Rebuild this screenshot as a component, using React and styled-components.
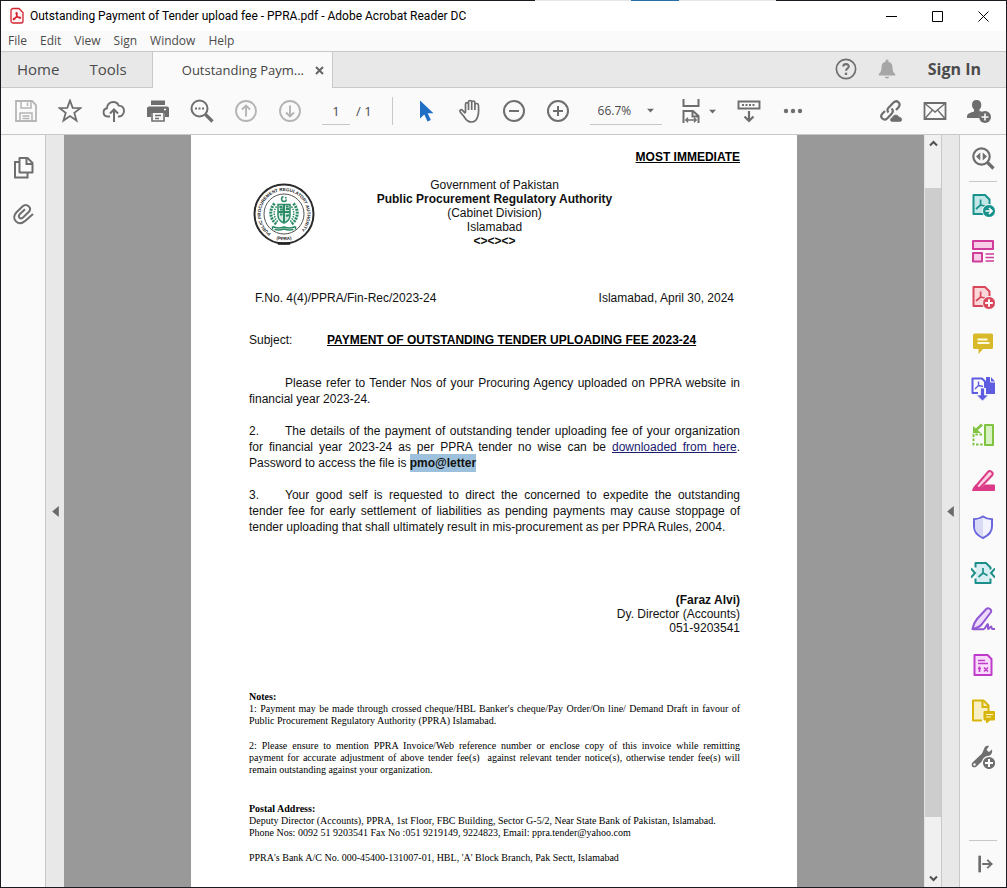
import React from "react";
import styled, { createGlobalStyle, css } from "styled-components";

const ui = `"Open Sans", "Noto Sans", sans-serif`;
const sans = `"Liberation Sans", Arial, sans-serif`;
const serif = `"Liberation Serif", "Times New Roman", serif`;
const line = "#c8c8c8";
const ink = "#6e6e6e";
const faint = "#b5b5b5";

const GlobalStyle = createGlobalStyle`
  *, *::before, *::after { box-sizing: border-box; }
  body { margin: 0; background: #fafafa; font-family: ${ui}; color: #4b4b4b; }
  button, input, select { font: inherit; color: inherit; }
  p, h1, h2 { margin: 0; }
`;

const AppWindow = styled.div`
  display: flex;
  flex-direction: column;
  min-height: 100vh;
  border: 1px solid #1c1a20;
  border-top: 0;
`;

const DesktopEdge = styled.div`
  height: 1px;
  display: grid;
  grid-template-columns: 534fr 96fr 48fr 97fr 230fr;
  background: #1c1a20;
`;
const EdgePiece = styled.span`
  background: ${(p) => p.$color};
`;

const PlainButton = styled.button`
  display: inline-flex;
  align-items: center;
  justify-content: center;
  padding: 0;
  border: 0;
  background: none;
  flex: none;
`;

const TitleBar = styled.header`
  display: flex;
  align-items: center;
  height: 30px;
  padding-left: 8px;
  gap: 5px;
  background: #fff;
`;
const WindowTitle = styled.h1`
  flex: 1;
  font-family: Roboto, ${ui};
  font-size: 12px;
  line-height: 16px;
  font-weight: 400;
  color: #000;
  white-space: nowrap;
`;
const WindowButton = styled(PlainButton)`
  width: 46px;
  height: 30px;
  color: #000;
`;

const MenuBar = styled.nav`
  display: flex;
  align-items: center;
  height: 21px;
  padding-left: 7px;
  gap: 13px;
  background: #fafafa;
  border-bottom: 1px solid ${line};
`;
const MenuButton = styled(PlainButton)`
  font-size: 12px;
  line-height: 16px;
`;

const TabBar = styled.div`
  display: flex;
  height: 36px;
  background: #e8e8e8;
`;
const tabBase = css`
  border-bottom: 1px solid ${line};
`;
const SectionTabs = styled.div`
  ${tabBase}
  display: flex;
  align-items: center;
  gap: 30px;
  width: 152px;
  padding: 0 0 2px 16px;
  border-right: 1px solid ${line};
`;
const SectionTab = styled(PlainButton)`
  font-size: 15px;
  line-height: 20px;
`;
const FileTab = styled.div`
  display: flex;
  align-items: center;
  justify-content: flex-end;
  gap: 11px;
  width: 180px;
  padding-right: 8px;
  background: #fafafa;
  border-right: 1px solid ${line};
`;
const FileTabName = styled(PlainButton)`
  font-size: 13px;
  line-height: 20px;
  color: #444;
`;
const Account = styled.div`
  ${tabBase}
  flex: 1;
  display: flex;
  align-items: center;
  justify-content: flex-end;
  gap: 19px;
  padding: 0 25px 2px 0;
`;
const AccountButton = styled(PlainButton)`
  color: ${ink};
`;
const SignIn = styled(PlainButton)`
  margin-left: 11px;
  font-size: 16px;
  line-height: 20px;
  font-weight: 700;
`;

const Toolbar = styled.div`
  display: flex;
  align-items: center;
  height: 47px;
  padding: 0 5px 0 3px;
  background: #fafafa;
  border-bottom: 1px solid ${line};
`;
const ToolButton = styled(PlainButton)`
  width: 44px;
  height: 40px;
  color: ${(p) => (p.disabled ? faint : ink)};
`;
const PageCounter = styled.label`
  display: flex;
  align-items: center;
  gap: 6px;
  margin-left: 10px;
  font-size: 13px;
  line-height: 20px;
`;
const PageInput = styled.input`
  width: 28px;
  height: 28px;
  padding: 0;
  text-align: center;
  border: 0;
  border-bottom: 1px solid ${line};
  background: none;
`;
const Divider = styled.span`
  width: 1px;
  height: 28px;
  margin: 0 11px 0 20px;
  background: ${line};
`;
const ZoomField = styled.span`
  display: flex;
  align-items: center;
  width: 72px;
  height: 28px;
  margin: 0 14px 0 10px;
  padding-right: 8px;
  border-bottom: 1px solid ${line};
`;
const ZoomSelect = styled.select`
  flex: 1;
  min-width: 0;
  padding: 0 0 0 8px;
  border: 0;
  background: none;
  appearance: none;
  font-size: 12px;
`;
const ToolGap = styled.span`
  flex: 1;
`;
const FitButton = styled(ToolButton)`
  gap: 6px;
  margin-right: 7px;
`;

const Workspace = styled.div`
  flex: 1;
  display: flex;
`;
const SideNav = styled.nav`
  display: flex;
  flex-direction: column;
  align-items: center;
  width: 45px;
  padding: 10px 0 0 2px;
  background: #fafafa;
  border-right: 1px solid ${line};
`;
const NavButton = styled(PlainButton)`
  width: 40px;
  height: 46px;
  color: ${ink};
`;
const Splitter = styled(PlainButton)`
  width: ${(p) => p.$width};
  align-self: stretch;
  background: #e8e8e8;
  border-left: ${(p) => (p.$ruled ? `1px solid ${line}` : "0")};
`;
const Viewer = styled.main`
  flex: 1;
  min-width: 0;
  background: #999;
`;

const Scrollbar = styled.div`
  display: flex;
  flex-direction: column;
  width: 17px;
  background: #f0f0f0;
  border-left: 1px solid #e4e4e4;
`;
const ScrollButton = styled(PlainButton)`
  height: 17px;
  color: #505050;
`;
const ScrollSpace = styled.span`
  flex: ${(p) => p.$share};
  background: ${(p) => (p.$thumb ? "#cdcdcd" : "none")};
`;

const ToolsPane = styled.aside`
  display: flex;
  flex-direction: column;
  align-items: center;
  width: 47px;
  background: #fafafa;
  border-left: 1px solid ${line};
`;
const PaneButton = styled(PlainButton)`
  width: 46px;
  height: 46px;
  color: ${ink};
`;
const PaneRule = styled.span`
  width: 28px;
  height: 1px;
  background: ${line};
`;
const PaneGap = styled.span`
  flex: 1;
`;

const Paper = styled.article`
  max-width: 606px;
  min-height: 100%;
  margin: 0 auto;
  padding: 15px 57px 22px 58px;
  background: #fff;
  color: #111;
  font-family: ${sans};
  font-size: 12px;
  line-height: 14px;
`;
const Urgency = styled.p`
  text-align: right;
  font-weight: 700;
  text-decoration: underline;
  color: #000;
`;
const Letterhead = styled.div`
  display: grid;
  grid-template-columns: 1fr auto 1fr;
  margin-top: 14px;
  text-align: center;
`;
const SealBox = styled.div`
  padding: 5px 0 0 4px;
  text-align: left;
`;
const RefRow = styled.div`
  display: flex;
  justify-content: space-between;
  margin-top: 43px;
  padding: 0 6px;
`;
const SubjectRow = styled.div`
  display: flex;
  margin-top: 28px;
`;
const SubjectLabel = styled.span`
  width: 78px;
`;
const SubjectTitle = styled.h2`
  font-size: 12px;
  line-height: 14px;
  text-decoration: underline;
  color: #000;
`;
const Letter = styled.div`
  display: grid;
  gap: 16px;
  margin-top: 28px;
  line-height: 16px;
  text-align: justify;
`;
const Para = styled.p`
  text-indent: ${(p) => (p.$indent ? "36px" : "0")};
`;
const ParaNumber = styled.span`
  display: inline-block;
  width: 36px;
`;
const LetterLink = styled.a`
  color: #1a1a6e;
  text-decoration: underline;
`;
const Marked = styled.mark`
  font-weight: 700;
  color: #111;
  background: #9dc1dc;
  padding: 2px 0;
`;
const Signature = styled.div`
  margin-top: 58px;
  text-align: right;
`;
const Notes = styled.section`
  margin-top: ${(p) => p.$top};
  font-family: ${serif};
  font-size: 10px;
  line-height: 12px;
  text-align: justify;
  color: #000;
`;
const Note = styled.p`
  & + & { margin-top: 13px; }
`;

function Icon({ size = 24, width = 2, children, ...rest }) {
  return (
    <svg width={size} height={size} viewBox="0 0 24 24" fill="none" stroke="currentColor" strokeWidth={width} aria-hidden="true" {...rest}>
      {children}
    </svg>
  );
}

const Trefoil = ({ color, w = 1.2 }) => (
  <path d="M9.600 6.500v5.500l-4.600 4M9.600 12l6 1.500" stroke={color} strokeWidth={w + 0.5} />
);

function Caret({ left, size = 7 }) {
  return (
    <svg width={size} height={size} viewBox="0 0 10 10" aria-hidden="true">
      <path d={left ? "M8 0v10L2 5z" : "M0 2.500h10L5 8z"} fill="#6a6a6a" />
    </svg>
  );
}

function PdfMark() {
  return (
    <svg width="16" height="18" viewBox="0 0 16 18" fill="none" stroke="#d3232f" aria-hidden="true">
      <path d="M4 1.500h6l4 4V14a2 2 0 0 1-2 2H4a2 2 0 0 1-2-2V3.500a2 2 0 0 1 2-2z" fill="#fff4f4" strokeWidth="1.300" />
      <path d="M7.500 5.500c1.400 0 .3 3.500-1 5.500-1 1.800-2.500 2.200-2.300 1.200.3-1.200 3.800-2.300 6.300-2.200 1.700.1 1.500 1.500.2 1.200C8.700 10.700 6 5.600 7.500 5.500z" strokeWidth="1.200" />
    </svg>
  );
}

function Seal() {
  return (
    <svg width="62" height="62" viewBox="0 0 124 124" role="img" aria-label="Public Procurement Regulatory Authority seal">
      <defs>
        <path id="ring-top" d="M36 101A46.500 46.500 0 1 1 92 98" />
        <path id="ring-foot" d="M24 99A54 54 0 0 0 100 99" />
      </defs>
      <circle cx="62" cy="62" r="59" fill="#fff" stroke="#2b2b2b" strokeWidth="4" />
      <circle cx="62" cy="62" r="40" fill="none" stroke="#555" strokeWidth="2" />
      <text fontFamily="Liberation Sans, Arial, sans-serif" fontWeight="700" fontSize="9" fill="#222">
        <textPath href="#ring-top">PUBLIC PROCUREMENT REGULATORY AUTHORITY</textPath>
      </text>
      <text fontFamily="Liberation Sans, Arial, sans-serif" fontWeight="700" fontSize="9" fill="#222">
        <textPath href="#ring-foot" startOffset="50%" textAnchor="middle">(PPRA)</textPath>
      </text>
      <path d="M50 121h24" stroke="#222" strokeWidth="5" />
      <g fill="none" stroke="#2d8a66">
        <path d="M61 27a5 5 0 1 0 6 6" strokeWidth="3" />
        <path d="M64 29l3 1" strokeWidth="3" />
        <path d="M43 41c-12 14-9 32 5 42M81 41c12 14 9 32-5 42" strokeWidth="6" strokeDasharray="4 2" />
        <path d="M47 47c-7 10-6 22 3 31M77 47c7 10 6 22-3 31" strokeWidth="3" strokeDasharray="3 2" />
        <path d="M50 43h24v22q0 10-12 15-12-5-12-15z" fill="#d4ebe1" strokeWidth="3" />
        <path d="M62 43v35M50 58h24M53 48h6M66 52h6M54 63h5M66 66l6-2M54 53h6M66 47h5" strokeWidth="4" />
        <path d="M39 87q10 5 23 1 13 4 23-1M43 93q9 2 19-1 10 3 19 1M39 87v6M85 87v6" strokeWidth="3" />
      </g>
    </svg>
  );
}

const icons = {
  save: (
    <Icon width={1.800}>
      <path d="M2 2h16l4 4v16H2z" />
      <path d="M7 2v7h10V2M13.500 3.500v3.500M6 22v-8h12v8M8.500 17h7M8.500 19.500h7" strokeWidth="1.500" />
    </Icon>
  ),
  star: (
    <Icon width={1.800}><path d="M12 1.500l2.700 7.400 7.800.2-6.200 4.800 2.200 7.600L12 17l-6.500 4.500 2.200-7.600L1.500 9.100l7.800-.2z" /></Icon>
  ),
  upload: (
    <Icon width={1.900}>
      <path d="M8 17.500H5.500a4.200 4.200 0 0 1-.6-8.300C4.800 5.500 8 3 11.200 3c2.700 0 4.600 1.300 5.500 3.600 3.200-.1 5.300 2.200 5.300 5.200 0 3.300-2.300 5.700-5 5.700h-1" />
      <path d="M12 23V11M8 14.500l4-4 4 4" strokeWidth="2" />
    </Icon>
  ),
  print: (
    <Icon width={0}>
      <path d="M5 1.500h14V6H5zM3 7.500h18a2 2 0 0 1 2 2V18h-4v-4H5v4H1V9.500a2 2 0 0 1 2-2z" fill="currentColor" />
      <path d="M6 14v8h12v-8M9 16.500h6M9 19.500h4" strokeWidth="1.600" />
      <path d="M18 10.500h2" stroke="#fff" strokeWidth="1.500" />
    </Icon>
  ),
  find: (
    <Icon width={2}>
      <circle cx="9.500" cy="9.500" r="8" />
      <path d="M15.500 15.500l7 7" strokeWidth="3.200" />
      <path d="M5 9.500h2M8.500 9.500h2M12 9.500h2" />
    </Icon>
  ),
  up: (
    <Icon width={1.900}><circle cx="12" cy="12" r="10" /><path d="M12 17.500V7M8 10.500l4-4 4 4" /></Icon>
  ),
  down: (
    <Icon width={1.900}><circle cx="12" cy="12" r="10" /><path d="M12 6.500V17M8 13.500l4 4 4-4" /></Icon>
  ),
  pointer: (
    <Icon width={0}><path d="M6 1.500v18l4.300-4 3.200 7 3.400-1.500-3.200-6.700h5.800z" fill="#1f6fc5" /></Icon>
  ),
  hand: (
    <Icon width={1.700}>
      <path d="M7.500 13.500V5.200c0-2 3-2 3 0V11M10.500 11V3c0-2 3.200-2 3.200 0v8M13.700 11V3.500c0-2 3.200-2 3.200 0V11M16.900 11V6c0-2 3.300-2 3.500 0 .3 3.500.6 7-.4 10.500C19 20.800 17 23 13.500 23 9 23 7.500 20 6 17.500L2.200 13c-1-1.800 1-3 2.300-1.700l3 3" strokeLinejoin="round" />
    </Icon>
  ),
  minus: (
    <Icon width={2}><circle cx="12" cy="12" r="10" /><path d="M7 12h10" /></Icon>
  ),
  plus: (
    <Icon width={2}><circle cx="12" cy="12" r="10" /><path d="M7 12h10M12 7v10" /></Icon>
  ),
  fit: (
    <Icon width={2}>
      <path d="M4.500 0v7h15V0M4.500 24V12h9.500l5.500 5v7M13.500 12v5.500h6" />
      <path d="M7 21h10M9 18.800L6.800 21 9 23.200M15 18.800l2.200 2.200-2.200 2.200" strokeWidth="1.400" />
    </Icon>
  ),
  scrollPages: (
    <Icon width={1.900}>
      <path d="M1.500 2.500h21v7h-21z" />
      <path d="M5 6h14" strokeDasharray="2 1.500" />
      <path d="M12 12v9.500M7.500 17.500l4.500 4.500 4.500-4.500" strokeWidth="2.200" />
    </Icon>
  ),
  more: (
    <Icon width={0}>
      <circle cx="5" cy="12" r="2.200" fill="currentColor" /><circle cx="12" cy="12" r="2.200" fill="currentColor" /><circle cx="19" cy="12" r="2.200" fill="currentColor" />
    </Icon>
  ),
  link: (
    <Icon width={2.200}>
      <path d="M9.500 13.500c-1.500-1.700-1.200-3.500 0-4.800l5-5.200c3.500-3.300 8 1.300 5 4.700L17 11" />
      <path d="M12.500 9.500c1.700 1.500 1.600 3.400.3 4.900l-4.600 5C4.800 22.600.2 18.200 3.300 14.700L6 12" />
      <path d="M13 22.500c-2.300-.3-2-3.700.4-3.700.5-3.500 5.600-3.600 6.600-.6 3.300-.4 3.800 4.300.8 4.300z" fill="currentColor" strokeWidth=".6" />
    </Icon>
  ),
  mail: (
    <Icon width={1.800}>
      <path d="M1.500 4h21v16h-21z" /><path d="M2 4.500l10 8.500 10-8.500M2 19.500l7.500-8.500M22 19.500L14.500 11" strokeWidth="1.400" />
    </Icon>
  ),
  person: (
    <Icon width={0}>
      <path d="M9.500 1C6.500 1 5 3 5 5.800c0 2 .8 3.700 2 4.700v2C4 13.500 0 14.500 0 17.500V19h12c0-3 1.500-5 4-6l-3.500-1v-1.500c1.200-1 1.800-2.700 1.800-4.700C14.300 3 12.500 1 9.500 1z" fill="currentColor" />
      <circle cx="18" cy="18" r="6" fill="currentColor" />
      <path d="M14.500 18h7M18 14.500v7" stroke="#fafafa" strokeWidth="1.600" />
    </Icon>
  ),
  help: (
    <Icon size={22} width={1.800}>
      <circle cx="12" cy="12" r="10.500" />
      <path d="M9 9.300c.2-3.600 6.200-3.500 6 0-.1 2.100-3 2.200-3 4.700" strokeWidth="2.300" />
      <path d="M12 16v2.500" strokeWidth="2.500" />
    </Icon>
  ),
  bell: (
    <Icon size={22} width={0}>
      <path d="M10.500 4V2h3v2c3 .6 4.500 2.800 4.500 6 0 4.500 1.500 6 3 7.500V19H3v-1.500C4.500 16 6 14.500 6 10c0-3.200 1.500-5.400 4.500-6zM9.500 20.500h5c-.5 2.500-4.500 2.500-5 0z" fill="#a6a6a6" />
    </Icon>
  ),
  pages: (
    <Icon width={2}>
      <path d="M7.500 2h8l5 5v9.500h-13z" strokeLinejoin="round" /><path d="M14.500 2v6h6" /><path d="M7 6H3v15.500h12.500V17" />
    </Icon>
  ),
  clip: (
    <Icon width={2}>
      <path d="M21 12l-7.600 6.800c-3.200 2.800-6.800 3.100-9.400.6-2.600-2.600-2.200-6.300.5-9.200l6.200-5.900c4-3.500 9.700 1.400 6.200 5.500L11 15.500c-2.700 2.300-5.500-.7-3.300-3.200l5.300-5.100" />
    </Icon>
  ),
  preview: (
    <Icon width={2.200}>
      <circle cx="10.500" cy="10.500" r="8.200" />
      <path d="M16.500 16.500l6 6" strokeWidth="3.200" /><path d="M9.300 6.500v8L5 10.500zM11.700 6.500v8l4.300-4z" fill="currentColor" strokeWidth="0" />
    </Icon>
  ),
  exportPdf: (
    <Icon stroke="#17918c">
      <path d="M2.500 2h11.500l4.500 4.500V21h-16z" fill="#c3e6e6" strokeLinejoin="round" />
      <Trefoil color="#17918c" />
      <circle cx="18" cy="18" r="6.500" fill="#17918c" stroke="#fafafa" strokeWidth="1" />
      <path d="M14.500 18h6M18 15l3 3-3 3" stroke="#fff" strokeWidth="1.700" />
    </Icon>
  ),
  organize: (
    <Icon stroke="#cf3d9b">
      <path d="M2 2h20v8H2z" fill="#f7cde8" strokeLinejoin="round" /><path d="M2 14h9v8.500H2z" fill="#f7cde8" strokeLinejoin="round" />
      <path d="M14.500 15H23M14.500 18.500H23M14.500 22H23" strokeWidth="1.300" />
    </Icon>
  ),
  createPdf: (
    <Icon stroke="#d9475a">
      <path d="M2.500 2h11.500l4.500 4.500V21h-16z" fill="#fbd7da" strokeLinejoin="round" />
      <Trefoil color="#d9475a" />
      <circle cx="18" cy="18" r="6.500" fill="#d9475a" stroke="#fafafa" strokeWidth="1" />
      <path d="M14.200 18h7.600M18 14.200v7.600" stroke="#fff" strokeWidth="1.900" />
    </Icon>
  ),
  comment: (
    <Icon width={0}>
      <path d="M3.500 2.500h17a1.500 1.500 0 0 1 1.500 1.500v12.500a1.500 1.500 0 0 1-1.500 1.500H12l-4.500 5v-5h-4A1.500 1.500 0 0 1 2 16.500V4a1.500 1.500 0 0 1 1.500-1.500z" fill="#d8b92a" />
      <path d="M6.500 8.500h10M6.500 12h12" stroke="#fffbe0" strokeWidth="1.800" />
    </Icon>
  ),
  combine: (
    <Icon stroke="#5e5ce0">
      <path d="M15 0h5l4 4.500V17h-9z" fill="#5e5ce0" strokeWidth="0" />
      <path d="M19.500 0v5H24" stroke="#fafafa" strokeWidth="1" />
      <path d="M7 16H1.500V1.500H11l3 3V11" fill="#fafafa" strokeLinejoin="round" />
      <path d="M7.500 4.500v4l-3.500 3.500M7.500 8.500l4.500 1" strokeWidth="1.400" />
      <path d="M9.500 11h4v7h4L11.500 24l-6-6h4z" fill="#5e5ce0" stroke="#fafafa" strokeWidth=".8" />
    </Icon>
  ),
  compare: (
    <Icon stroke="#80c342">
      <path d="M14 2h8v20h-8z" fill="#d9f2c4" strokeLinejoin="round" />
      <path d="M11 11.500H2.500v10H12" strokeDasharray="2.500 1.700" />
      <path d="M11 1.500L4 8" strokeWidth="2.500" /><path d="M2 3v7h8z" fill="#80c342" strokeWidth="0" />
    </Icon>
  ),
  highlight: (
    <Icon stroke="#dc3a86">
      <path d="M5 17L17 2.800c2-2 6 .6 4.200 3.400L9 18.800l-5.500 1.500z" fill="#fbd0e3" strokeLinejoin="round" />
      <path d="M1 22c.5-3 2-5 4-6.500l4 4 5-4h9a1 1 0 0 1 1 1v4.500a1 1 0 0 1-1 1z" fill="#dc3a86" strokeWidth="0" />
    </Icon>
  ),
  shield: (
    <Icon stroke="#6a66dc">
      <path d="M12 1.500c3 2 6 2.800 9 2.800v7c0 5.500-4 9.500-9 11.700-5-2.200-9-6.200-9-11.700v-7c3 0 6-.8 9-2.800z" fill="#f3f3fd" /><path d="M12 3v19c-4-2-8-5.500-8-10.500V5.300C7 5.200 9.500 4.500 12 3z" fill="#d8d9f5" strokeWidth="0" />
    </Icon>
  ),
  compress: (
    <Icon stroke="#1d8f8a">
      <path d="M5 2h10l4.500 4.500V22H5z" fill="#d8eef3" strokeWidth="0" />
      <path d="M4.500 6.500V2h10.500l4.500 4.500v2M4.500 17.500V22h15v-4.500" strokeLinejoin="round" />
      <path d="M0 7.500L4 12l-4 4.500M24 7.500L20 12l4 4.500" />
      <path d="M12 7v5l-4.500 4M12 12l4.500 2.500" strokeWidth="1.700" />
    </Icon>
  ),
  sign: (
    <Icon stroke="#9257d3">
      <path d="M1.500 22c.8-4 2-7 4.500-10L15.500 1.800c2-1.500 6 .8 4.200 3.700L11 17c-2.500 3-5.500 4.300-9.500 5z" fill="#ecd9fb" strokeLinejoin="round" />
      <path d="M2 22.200h10.500c2 0 2.500-4 4-5 1.500-.5-.5 4.500.8 4.800 1.200.2 1.600-2.600 2.700-2.600s.1 2.600 1.500 2.600H24" strokeWidth="1.900" />
    </Icon>
  ),
  certificate: (
    <Icon stroke="#bf3ccb">
      <path d="M3.500 2h13l4 4v16h-17z" fill="#f9dcfb" strokeLinejoin="round" />
      <path d="M7 7.500h7M7 10.500h10" strokeWidth="1.400" />
      <path d="M8.500 13.500v5.500M7 15.500h3M13 14.500l4 4M17 14.500l-4 4" strokeWidth="1.600" />
    </Icon>
  ),
  docComment: (
    <Icon stroke="#d8b50a">
      <path d="M11 21.500H2V1.500h10.500l5 5V12" fill="#f8efc4" strokeLinejoin="round" /><path d="M11.500 2v6h6" />
      <path d="M13 12.500h10.500v8.500H19L15.500 24v-3H13z" fill="#d8b50a" strokeWidth="1" /><path d="M15 15.500h7M15 18h5" stroke="#fff8d0" strokeWidth="1.200" />
    </Icon>
  ),
  wrench: (
    <Icon width={0}>
      <path d="M11 8.500L14 1.800c1.200-.9 2.800-1.200 4-.8l-2.500 4 2.500 2 3-2.500c.8 3.500-1.500 6.500-5 7L5.500 21.500c-3 2.500-6.500-1-4-4z" fill="currentColor" />
      <circle cx="3.500" cy="19.500" r="1.200" fill="#fafafa" />
      <circle cx="18" cy="18" r="6.700" fill="currentColor" stroke="#fafafa" strokeWidth="1.200" /><path d="M14 18h8M18 14v8" stroke="#fff" strokeWidth="2" />
    </Icon>
  ),
  expand: (
    <Icon size={20} width={2.200}>
      <path d="M8 2v20" strokeWidth="3.200" /><path d="M11 12h11M17 7l5.500 5-5.500 5" />
    </Icon>
  ),
};

const navigation = [["Save", "save", true], ["Star", "star"], ["Share to cloud", "upload"], ["Print", "print"], ["Find", "find"], ["Previous page", "up", true], ["Next page", "down", true]];
const pointerTools = [["Select", "pointer"], ["Hand", "hand"], ["Zoom out", "minus"], ["Zoom in", "plus"]];
const shareTools = [["Share link", "link"], ["Email", "mail"], ["Add people", "person"]];
const paneTools = [["Export PDF", "exportPdf"], ["Organize pages", "organize"], ["Create PDF", "createPdf"], ["Comment", "comment"], ["Combine files", "combine"], ["Compare files", "compare"], ["Redact", "highlight"], ["Protect", "shield"], ["Compress PDF", "compress"], ["Fill and sign", "sign"], ["Certificates", "certificate"], ["Send for comments", "docComment"], ["More tools", "wrench"]];

const ToolGroup = ({ items }) =>
  items.map(([name, icon, disabled]) => (
    <ToolButton key={name} aria-label={name} disabled={disabled}>{icons[icon]}</ToolButton>
  ));

export default function App() {
  return (
    <AppWindow>
      <GlobalStyle />
      <DesktopEdge>
        <EdgePiece />
        <EdgePiece $color="#e6e6e6" />
        <EdgePiece $color="#2a6ca8" />
        <EdgePiece $color="#e6e6e6" />
      </DesktopEdge>
      <TitleBar>
        <PdfMark />
        <WindowTitle>Outstanding Payment of Tender upload fee - PPRA.pdf - Adobe Acrobat Reader DC</WindowTitle>
        <div>
          <WindowButton aria-label="Minimize"><svg width="11" height="11" stroke="currentColor"><path d="M0 5.500h11" /></svg></WindowButton>
          <WindowButton aria-label="Maximize"><svg width="11" height="11" fill="none" stroke="currentColor"><path d="M.5.500h10v10H.5z" /></svg></WindowButton>
          <WindowButton aria-label="Close window"><svg width="11" height="11" stroke="currentColor"><path d="M.5.500l10 10M10.500.500l-10 10" /></svg></WindowButton>
        </div>
      </TitleBar>
      <MenuBar>
        {["File", "Edit", "View", "Sign", "Window", "Help"].map((m) => <MenuButton key={m}>{m}</MenuButton>)}
      </MenuBar>
      <TabBar>
        <SectionTabs>
          <SectionTab>Home</SectionTab>
          <SectionTab>Tools</SectionTab>
        </SectionTabs>
        <FileTab>
          <FileTabName>Outstanding Paym...</FileTabName>
          <PlainButton aria-label="Close tab">
            <svg width="9" height="9" stroke="#666" strokeWidth="2"><path d="M1 1l7 7M8 1L1 8" /></svg>
          </PlainButton>
        </FileTab>
        <Account>
          <AccountButton aria-label="Help">{icons.help}</AccountButton>
          <AccountButton aria-label="Notifications">{icons.bell}</AccountButton>
          <SignIn>Sign In</SignIn>
        </Account>
      </TabBar>
      <Toolbar>
        <ToolGroup items={navigation} />
        <PageCounter>
          <PageInput aria-label="Page number" defaultValue="1" />
          <span>/ 1</span>
        </PageCounter>
        <Divider />
        <ToolGroup items={pointerTools} />
        <ZoomField>
          <ZoomSelect aria-label="Zoom level" defaultValue="66.7%">
            <option>66.7%</option>
            <option>100%</option>
          </ZoomSelect>
          <Caret />
        </ZoomField>
        <FitButton aria-label="Fit width">{icons.fit}<Caret /></FitButton>
        <ToolGroup items={[["Scroll pages", "scrollPages"], ["More", "more"]]} />
        <ToolGap />
        <ToolGroup items={shareTools} />
      </Toolbar>
      <Workspace>
        <SideNav>
          <NavButton aria-label="Page thumbnails">{icons.pages}</NavButton>
          <NavButton aria-label="Attachments">{icons.clip}</NavButton>
        </SideNav>
        <Splitter $width="18px" aria-label="Toggle navigation pane"><Caret left size={11} /></Splitter>
        <Viewer>
          <Paper>
            <Urgency>MOST IMMEDIATE</Urgency>
            <Letterhead>
              <SealBox><Seal /></SealBox>
              <div>
                <p>Government of Pakistan</p>
                <p><b>Public Procurement Regulatory Authority</b></p>
                <p>(Cabinet Division)</p>
                <p>Islamabad</p>
                <p><b>&lt;&gt;&lt;&gt;&lt;&gt;</b></p>
              </div>
            </Letterhead>
            <RefRow>
              <span>F.No. 4(4)/PPRA/Fin-Rec/2023-24</span>
              <span>Islamabad, April 30, 2024</span>
            </RefRow>
            <SubjectRow>
              <SubjectLabel>Subject:</SubjectLabel>
              <SubjectTitle>PAYMENT OF OUTSTANDING TENDER UPLOADING FEE 2023-24</SubjectTitle>
            </SubjectRow>
            <Letter>
              <Para $indent>Please refer to Tender Nos of your Procuring Agency uploaded on PPRA website in financial year 2023-24.</Para>
              <Para>
                <ParaNumber>2.</ParaNumber>The details of the payment of outstanding tender uploading fee of your organization for financial year 2023-24 as per PPRA tender no wise can be <LetterLink href="#download">downloaded from here</LetterLink>. Password to access the file is <Marked>pmo@letter</Marked>
              </Para>
              <Para>
                <ParaNumber>3.</ParaNumber>Your good self is requested to direct the concerned to expedite the outstanding tender fee for early settlement of liabilities as pending payments may cause stoppage of tender uploading that shall ultimately result in mis-procurement as per PPRA Rules, 2004.
              </Para>
            </Letter>
            <Signature>
              <p><b>(Faraz Alvi)</b></p>
              <p>Dy. Director (Accounts)</p>
              <p>051-9203541</p>
            </Signature>
            <Notes $top="56px">
              <Note><b>Notes:</b><br />1: Payment may be made through crossed cheque/HBL Banker's cheque/Pay Order/On line/ Demand Draft in favour of Public Procurement Regulatory Authority (PPRA) Islamabad.</Note>
              <Note>2: Please ensure to mention PPRA Invoice/Web reference number or enclose copy of this invoice while remitting payment&nbsp;for accurate adjustment of above tender fee(s)&nbsp; against relevant tender notice(s), otherwise tender fee(s) will remain outstanding against your organization.</Note>
            </Notes>
            <Notes $top="27px">
              <Note><b>Postal Address:</b><br />Deputy Director (Accounts), PPRA, 1st Floor, FBC Building, Sector G-5/2, Near State Bank of Pakistan, Islamabad.<br />Phone Nos: 0092 51 9203541 Fax No :051 9219149, 9224823, Email: ppra.tender@yahoo.com</Note>
              <Note>PPRA's Bank A/C No. 000-45400-131007-01, HBL, 'A' Block Branch, Pak Sectt, Islamabad</Note>
            </Notes>
          </Paper>
        </Viewer>
        <Scrollbar>
          <ScrollButton aria-label="Scroll up"><svg width="9" height="7" fill="none" stroke="currentColor" strokeWidth="2"><path d="M1 5.500L4.500 2 8 5.500" /></svg></ScrollButton>
          <ScrollSpace $share={36} />
          <ScrollSpace $share={630} $thumb />
          <ScrollSpace $share={53} />
          <ScrollButton aria-label="Scroll down"><svg width="9" height="7" fill="none" stroke="currentColor" strokeWidth="2"><path d="M1 1.500L4.500 5 8 1.500" /></svg></ScrollButton>
        </Scrollbar>
        <Splitter $width="18px" $ruled aria-label="Toggle tools pane"><Caret left size={11} /></Splitter>
        <ToolsPane>
          <PaneButton aria-label="Search tools">{icons.preview}</PaneButton>
          <PaneRule />
          {paneTools.map(([name, icon]) => <PaneButton key={name} aria-label={name}>{icons[icon]}</PaneButton>)}
          <PaneGap />
          <PaneRule />
          <PaneButton aria-label="Collapse pane">{icons.expand}</PaneButton>
        </ToolsPane>
      </Workspace>
    </AppWindow>
  );
}
